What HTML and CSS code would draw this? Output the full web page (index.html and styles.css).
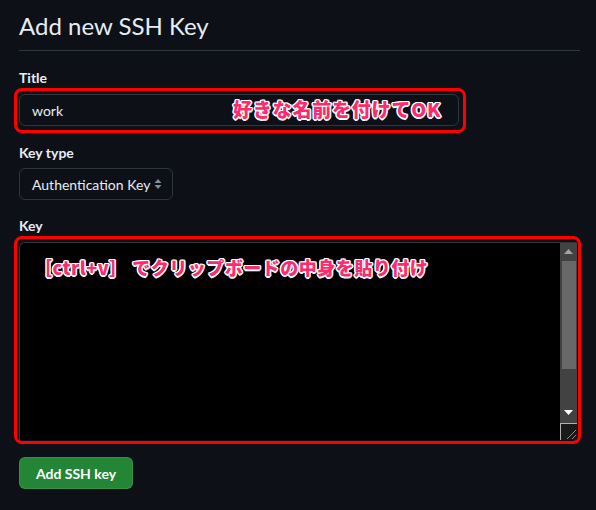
FILE: index.html
```html
<!DOCTYPE html>
<html lang="ja">
<head>
<meta charset="utf-8">
<link rel="stylesheet" href="styles.css">
</head>
<body>
<div class="page">
  <h2 class="heading">Add new SSH Key</h2>
  <form class="form">
    <label class="label label-title">Title</label>
    <div class="mark mark-title">
      <input class="input" type="text" value="work">
      <span class="note note-title">好きな名前を付けてOK</span>
    </div>

    <label class="label label-type">Key type</label>
    <div class="select">
      <span>Authentication Key</span>
      <svg class="updown" width="8" height="12" viewBox="0 0 8 12"><path d="M4 1 L7.5 5 L0.5 5 Z M4 11 L7.5 7 L0.5 7 Z" fill="#848d97"/></svg>
    </div>

    <label class="label label-key">Key</label>
    <div class="mark mark-key">
      <div class="keybox">
        <textarea class="keyarea"></textarea>
        <div class="scrollbar">
          <div class="sb-btn"><svg width="9" height="5" viewBox="0 0 9 5"><path d="M4.5 0 L9 5 L0 5 Z" fill="#a3a3a3"/></svg></div>
          <div class="sb-track"><div class="sb-thumb"></div></div>
          <div class="sb-btn sb-down"><svg width="9" height="5" viewBox="0 0 9 5"><path d="M0 0 L9 0 L4.5 5 Z" fill="#ffffff"/></svg></div>
          <div class="sb-corner"><svg width="14" height="14" viewBox="0 0 14 14"><path d="M4 13 L13 4 M9 13 L13 9" stroke="#8a8a8a" stroke-width="1"/></svg></div>
        </div>
      </div>
      <span class="note note-key">［ctrl+v］ でクリップボードの中身を貼り付け</span>
    </div>

    <button class="btn" type="button">Add SSH key</button>
  </form>
</div>
</body>
</html>
```
FILE: styles.css
```css
html, body {
  margin: 0;
  padding: 0;
  background: #0d1117;
}
body {
  font-family: Lato, "Liberation Sans", sans-serif;
  color: #e6edf3;
  font-size: 14px;
}
.page {
  padding: 8px 16px 0 19px;
}
.heading {
  margin: 0;
  font-size: 24px;
  font-weight: 400;
  line-height: 36px;
  padding-bottom: 6px;
  border-bottom: 1px solid #30363d;
}
.form {
  display: flex;
  flex-direction: column;
  align-items: flex-start;
}
.label {
  display: block;
  font-weight: 700;
  font-size: 14px;
  line-height: 21px;
}
.label-title { margin-top: 16px; }
.label-type { margin-top: 9px; }
.label-key { margin-top: 16px; line-height: 20px; }

.mark {
  position: relative;
  border: 3px solid #ff0000;
  border-radius: 8px;
  margin-left: -5px;
}
.mark-title {
  padding: 3px 4px 4px 2px;
}
.mark-key {
  padding: 3px 1px 1px 2px;
}
.input {
  display: block;
  box-sizing: border-box;
  width: 440px;
  height: 32px;
  margin: 0;
  padding: 0 12px;
  background: #0d1117;
  border: 1px solid #30363d;
  border-radius: 6px;
  color: #e6edf3;
  font-family: Lato, "Liberation Sans", sans-serif;
  font-size: 14px;
  outline: none;
}
.note {
  position: absolute;
  font-family: "Noto Sans CJK JP", sans-serif;
  font-weight: 900;
  color: #ff2a6d;
  white-space: nowrap;
  text-shadow:
    1.5px 0 0 #fff, -1.5px 0 0 #fff, 0 1.5px 0 #fff, 0 -1.5px 0 #fff,
    1px 1px 0 #fff, -1px 1px 0 #fff, 1px -1px 0 #fff, -1px -1px 0 #fff;
}
.note-title {
  left: 216px;
  top: 4px;
  font-size: 19px;
  line-height: 28px;
  letter-spacing: 0.8px;
}
.note-key {
  left: 17px;
  top: 14px;
  font-size: 18px;
  line-height: 28px;
  letter-spacing: 0.5px;
}
.select {
  box-sizing: border-box;
  width: 154px;
  height: 32px;
  margin-top: 5px;
  padding: 0 10px 0 12px;
  display: flex;
  align-items: center;
  justify-content: space-between;
  border: 1px solid #30363d;
  border-radius: 6px;
  background: #0d1117;
}
.keybox {
  box-sizing: border-box;
  width: 558px;
  height: 198px;
  display: flex;
  background: #000;
  border: 1px solid #30363d;
  border-right: none;
  border-bottom: none;
  border-radius: 6px 0 0 0;
}
.keyarea {
  flex: 1;
  margin: 0;
  border: none;
  background: transparent;
  resize: none;
  outline: none;
  color: #e6edf3;
}
.scrollbar {
  width: 17px;
  display: flex;
  flex-direction: column;
  background: #424242;
}
.sb-btn {
  height: 16px;
  display: flex;
  align-items: center;
  justify-content: center;
}
.sb-track {
  flex: 1;
  padding: 2px 1px 0 2px;
  display: flex;
  flex-direction: column;
}
.sb-thumb {
  height: 108px;
  background: #686868;
}
.sb-down {
  margin-bottom: 3px;
}
.sb-corner {
  box-sizing: border-box;
  height: 17px;
  background: #1a1a1a;
  border-left: 1px solid #b0b0b0;
  border-top: 1px solid #b0b0b0;
  display: flex;
  align-items: flex-end;
  justify-content: flex-end;
}
.btn {
  margin-top: 13px;
  box-sizing: border-box;
  width: 114px;
  height: 32px;
  background: #238636;
  border: 1px solid rgba(240, 246, 252, 0.1);
  border-radius: 6px;
  color: #ffffff;
  font-family: Lato, "Liberation Sans", sans-serif;
  font-weight: 700;
  font-size: 14px;
  padding: 0;
}
```
